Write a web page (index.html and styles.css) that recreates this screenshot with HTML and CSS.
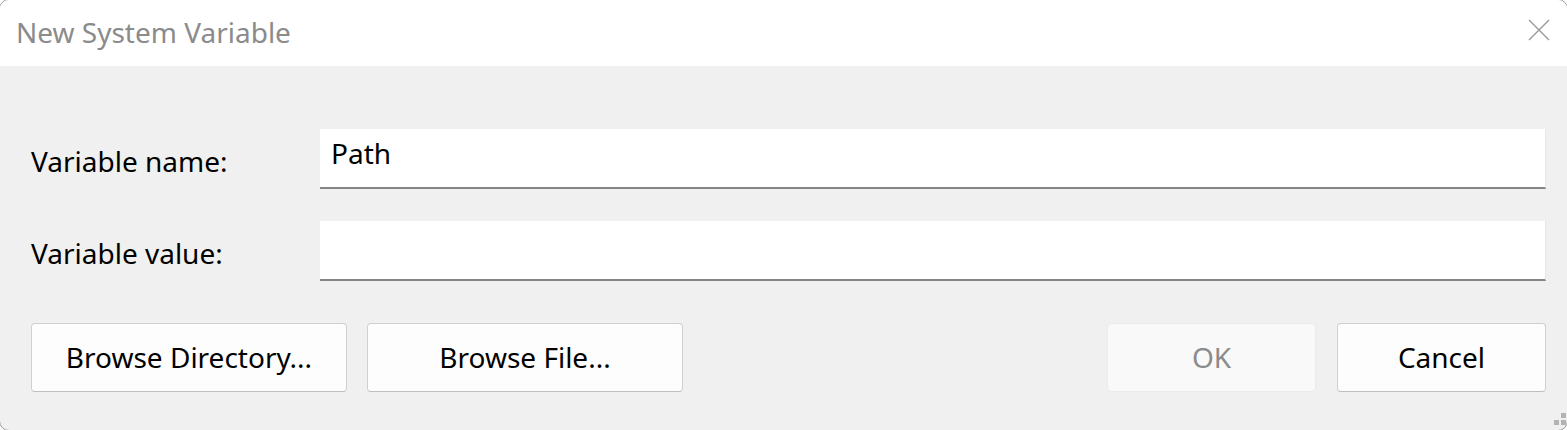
FILE: index.html
```html
<!DOCTYPE html>
<html>
<head>
<meta charset="utf-8">
<link rel="stylesheet" href="styles.css">
</head>
<body>
<div class="window">
  <div class="titlebar">
    <span class="title">New System Variable</span>
    <svg class="close" width="22" height="22" viewBox="0 0 22 22"><path d="M1 1 L21 21 M21 1 L1 21" stroke="#999" stroke-width="1.4" fill="none"/></svg>
  </div>
  <div class="content">
    <div class="fields">
      <label class="label">Variable name:</label>
      <div class="input"><span class="value">Path</span></div>
      <label class="label">Variable value:</label>
      <div class="input"></div>
    </div>
    <div class="buttons">
      <div class="group">
        <button class="btn btn-wide">Browse Directory...</button>
        <button class="btn btn-wide">Browse File...</button>
      </div>
      <div class="group group-right">
        <button class="btn btn-narrow" disabled>OK</button>
        <button class="btn btn-narrow">Cancel</button>
      </div>
    </div>
  </div>
  <div class="grip">
    <span class="dot d1"></span>
    <span class="dot d2"></span>
    <span class="dot d3"></span>
  </div>
</div>
</body>
</html>
```

FILE: styles.css
```css
* { box-sizing: border-box; }
html, body {
  margin: 0;
  padding: 0;
  background: #ffffff;
  width: 1567px;
  height: 430px;
  overflow: hidden;
}
.window {
  position: relative;
  margin: -1px;
  width: 1569px;
  height: 432px;
  border: 1px solid #9a9a9a;
  border-radius: 10px;
  overflow: hidden;
  background: #f0f0f0;
  font-family: "Noto Sans", "Open Sans", sans-serif;
  color: #000;
}
.titlebar {
  height: 66px;
  background: #ffffff;
  display: flex;
  align-items: center;
  justify-content: space-between;
  padding: 0 17px 0 16px;
}
.title {
  font-size: 28px;
  color: #8b8b8b;
  margin-top: -2px;
}
.close { margin-top: -6px; }
.content {
  padding: 63px 21px 0 31px;
}
.fields {
  display: grid;
  grid-template-columns: 289px 1fr;
  grid-auto-rows: 60px;
  row-gap: 32px;
  align-items: center;
}
.label {
  font-size: 28px;
  padding-top: 4px;
}
.input {
  height: 60px;
  background: #ffffff;
  border-right: 1px solid #e6e6e6;
  border-bottom: 2px solid #858585;
  padding: 4px 11px 0;
  font-size: 28px;
  line-height: 40px;
}
.buttons {
  margin-top: 42px;
  display: flex;
  justify-content: space-between;
}
.group { display: flex; gap: 20px; }
.group-right { gap: 21px; }
.btn {
  height: 69px;
  background: #fdfdfd;
  border: 1px solid #d0d0d0;
  border-bottom-color: #bfbfbf;
  border-radius: 4px;
  font-family: inherit;
  font-size: 28px;
  color: #000;
  padding: 0 0 2px 0;
}
.btn-wide { width: 316px; }
.btn-narrow { width: 209px; }
.btn:disabled {
  background: #f9f9f9;
  border-color: #ebebeb;
  color: #8b8b8b;
}
.grip {
  position: absolute;
  right: 1px;
  bottom: 5px;
  width: 12px;
  height: 12px;
}
.dot {
  position: absolute;
  width: 5px;
  height: 5px;
  background: #b3b3b3;
}
.d1 { right: 0; top: 0; }
.d2 { left: 0; bottom: 0; }
.d3 { right: 0; bottom: 0; }
```
